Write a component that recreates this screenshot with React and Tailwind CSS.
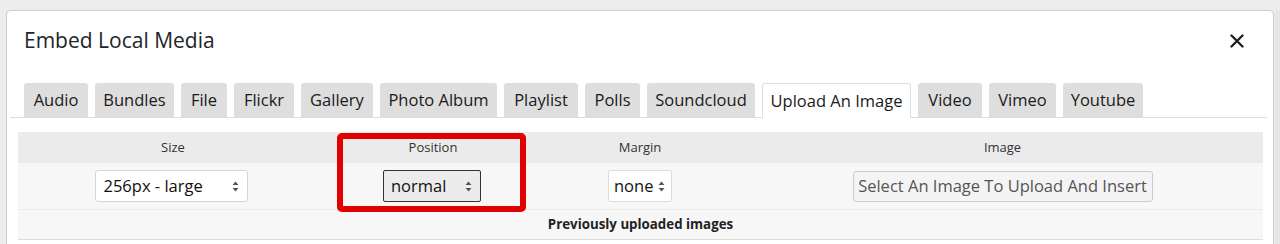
import React from "react";

const tabs = [
  ["Audio", 64],
  ["Bundles", 79],
  ["File", 46],
  ["Flickr", 60],
  ["Gallery", 72],
  ["Photo Album", 117],
  ["Playlist", 74],
  ["Polls", 55],
  ["Soundcloud", 108],
  ["Upload An Image", 149, true],
  ["Video", 64],
  ["Vimeo", 67],
  ["Youtube", 80],
];

function Arrows() {
  return (
    <svg width="7" height="11" viewBox="0 0 7 11" className="shrink-0">
      <path d="M3.5 0.5 L6.5 4 L0.5 4 Z" fill="#555" />
      <path d="M3.5 10.5 L6.5 7 L0.5 7 Z" fill="#555" />
    </svg>
  );
}

export default function App() {
  return (
    <div className="relative w-[1280px] h-[244px] overflow-hidden bg-[#ededed] pt-[10px] pl-[6px] font-['Open_Sans',sans-serif]">
      <div className="w-[1268px] h-[250px] bg-white border border-[#cdcdcd] rounded-t-[4px]">
        <div className="h-[59px] flex items-center justify-between pl-[17px] pr-[29px]">
          <div className="text-[21px] text-[#212529]">Embed Local Media</div>
          <svg width="14" height="14" viewBox="0 0 14 14">
            <path d="M1.5 1.5 L12.5 12.5 M12.5 1.5 L1.5 12.5" stroke="#222" strokeWidth="2.4" strokeLinecap="round" />
          </svg>
        </div>
        <div className="mt-[13px] ml-[3px] mr-[6px] pl-[14px] flex gap-[7px] border-b border-[#dddddd]">
          {tabs.map(([t, w, active]) => (
            <div
              key={t}
              style={{ width: w }}
              className={
                "h-[34px] flex items-center justify-center text-[16.5px] text-[#1a1a1a] rounded-t-[3px] whitespace-nowrap " +
                (active
                  ? "bg-white border border-b-0 border-[#dddddd] -mb-px h-[35px]"
                  : "bg-[#dedede]")
              }
            >
              {t}
            </div>
          ))}
        </div>
        <div className="ml-[11px] mt-[14px] w-[1245px] text-[#333]">
          <div className="flex h-[31px] bg-[#ebebeb] text-[13px] items-center">
            <div className="w-[310px] text-center">Size</div>
            <div className="w-[210px] text-center">Position</div>
            <div className="w-[204px] text-center">Margin</div>
            <div className="flex-1 text-center">Image</div>
          </div>
          <div className="flex h-[47px] bg-[#f7f7f7] items-center border-b border-[#ececec]">
            <div className="w-[310px] flex justify-center">
              <div className="ml-[-4px] w-[153px] h-[32px] bg-white border border-[#d5d5d5] rounded-[3px] flex items-center justify-between pl-[8px] pr-[8px] text-[16.5px] text-[#111]">
                <span>256px - large</span>
                <Arrows />
              </div>
            </div>
            <div className="w-[210px] flex justify-center">
              <div className="ml-[-2px] w-[98px] h-[32px] bg-[#ececec] border border-[#333] rounded-[2px] flex items-center justify-between pl-[7px] pr-[8px] text-[16.5px] text-[#111]">
                <span>normal</span>
                <Arrows />
              </div>
            </div>
            <div className="w-[204px] flex justify-center">
              <div className="w-[64px] h-[32px] bg-white border border-[#dcdcdc] rounded-[2px] flex items-center justify-between pl-[5px] pr-[6px] text-[16.5px] text-[#111]">
                <span>none</span>
                <Arrows />
              </div>
            </div>
            <div className="flex-1 flex justify-center">
              <div className="w-[300px] h-[31px] bg-[#f4f4f4] border border-[#cccccc] rounded-[3px] flex items-center justify-center text-[16.5px] text-[#555] whitespace-nowrap">
                Select An Image To Upload And Insert
              </div>
            </div>
          </div>
          <div className="h-[30px] bg-[#f7f7f7] border-b border-[#dddddd] flex items-center justify-center text-[13.3px] font-bold text-[#222]">
            Previously uploaded images
          </div>
        </div>
      </div>
      <div className="absolute left-[337px] top-[133px] w-[189px] h-[79px] border-[6px] border-[#e30000] rounded-[5px]" />
      <div className="absolute right-0 top-[10px] w-[5px] h-[234px] bg-[#e6e6e6]" />
    </div>
  );
}
